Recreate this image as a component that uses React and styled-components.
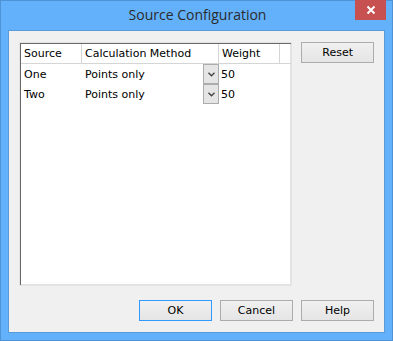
import React from 'react'
import styled, { createGlobalStyle } from 'styled-components'

const rows = [
  { id: 1, source: 'One', method: 'Points only', weight: '50' },
  { id: 2, source: 'Two', method: 'Points only', weight: '50' },
]

const GlobalStyle = createGlobalStyle`
  html, body { margin: 0; padding: 0; background: #ffffff; }
`

const App = () => {
  return (
    <>
      <GlobalStyle />
      <Window>
        <TitleBar>
          <Title>Source Configuration</Title>
          <CloseButton>
            <svg width="10" height="10" viewBox="0 0 10 10">
              <path d="M1.5 1.5 L8.5 8.5 M8.5 1.5 L1.5 8.5" stroke="#fff" strokeWidth="2" />
            </svg>
          </CloseButton>
        </TitleBar>
        <Client>
          <TopArea>
            <Grid>
              <HeaderRow>
                <HeaderCell w={61}>Source</HeaderCell>
                <HeaderCell w={137}>Calculation Method</HeaderCell>
                <HeaderCell w={61}>Weight</HeaderCell>
              </HeaderRow>
              {rows.map((row) => (
                <Row key={row.id}>
                  <Cell w={61}>{row.source}</Cell>
                  <Cell w={137}>
                    <MethodText>{row.method}</MethodText>
                    <DropButton>
                      <svg width="7" height="5" viewBox="0 0 7 5">
                        <path d="M0.5 0.8 L3.5 3.8 L6.5 0.8" stroke="#444" strokeWidth="1.4" fill="none" />
                      </svg>
                    </DropButton>
                  </Cell>
                  <Cell w={61} pad={2}>{row.weight}</Cell>
                </Row>
              ))}
            </Grid>
            <Button>Reset</Button>
          </TopArea>
          <ButtonRow>
            <Button primary>OK</Button>
            <Button>Cancel</Button>
            <Button>Help</Button>
          </ButtonRow>
        </Client>
      </Window>
    </>
  )
}

export default App

const Window = styled.div`
  width: 393px;
  height: 341px;
  box-sizing: border-box;
  background: #63b1fb;
  border: 1px solid #4f93d6;
  display: flex;
  flex-direction: column;
  padding: 0 7px 7px 7px;
  font-family: Tahoma, "DejaVu Sans", "Liberation Sans", sans-serif;
`
const TitleBar = styled.div`
  height: 29px;
  position: relative;
  display: flex;
  justify-content: center;
  align-items: center;
  flex-shrink: 0;
`
const Title = styled.div`
  font-family: "Open Sans", "Noto Sans", sans-serif;
  font-size: 14px;
  color: #2b2b2b;
  margin-top: -3px;
  margin-left: 2px;
`
const CloseButton = styled.div`
  position: absolute;
  top: -1px;
  right: -1px;
  width: 31px;
  height: 20px;
  background: #c75050;
  display: flex;
  justify-content: center;
  align-items: center;
`
const Client = styled.div`
  flex: 1;
  background: #f0f0f0;
  border: 1px solid #5a9ad6;
  display: flex;
  flex-direction: column;
  padding: 11px 10px 11px 10px;
  box-sizing: border-box;
`
const TopArea = styled.div`
  display: flex;
  gap: 9px;
  align-items: flex-start;
`
const Grid = styled.div`
  width: 274px;
  height: 244px;
  box-sizing: border-box;
  background: #ffffff;
  border-top: 1px solid #a0a0a0;
  border-left: 1px solid #a0a0a0;
  border-right: 1px solid #ffffff;
  border-bottom: 1px solid #ffffff;
  box-shadow: inset 1px 1px 0 #696969, inset -1px -1px 0 #e3e3e3;
  padding: 1px 0 0 1px;
  outline: 1px solid #e3e3e3;
  outline-offset: -1px;
`
const HeaderRow = styled.div`
  display: flex;
  height: 20px;
  border-bottom: 1px solid #d5d5d5;
  box-sizing: border-box;
`
const HeaderCell = styled.div`
  width: ${(p) => p.w}px;
  box-sizing: border-box;
  border-right: 1px solid #d5d5d5;
  padding-left: 3px;
  font-size: 11px;
  line-height: 19px;
  color: #000;
  white-space: nowrap;
`
const Row = styled.div`
  display: flex;
  height: 20px;
`
const Cell = styled.div`
  width: ${(p) => p.w}px;
  box-sizing: border-box;
  display: flex;
  align-items: center;
  padding-left: ${(p) => (p.pad !== undefined ? p.pad : 3)}px;
  font-size: 11px;
  color: #000;
  white-space: nowrap;
`
const MethodText = styled.span`
  flex: 1;
`
const DropButton = styled.div`
  width: 16px;
  height: 20px;
  box-sizing: border-box;
  background: #e5e5e5;
  border: 1px solid #acacac;
  display: flex;
  justify-content: center;
  align-items: center;
`
const Button = styled.button`
  width: 73px;
  height: 21px;
  box-sizing: border-box;
  padding: 0;
  margin: 0;
  background: linear-gradient(#f0f0f0, #e5e5e5);
  border: 1px solid ${(p) => (p.primary ? '#3399ff' : '#acacac')};
  font-family: Tahoma, "DejaVu Sans", "Liberation Sans", sans-serif;
  font-size: 11px;
  color: #000;
`
const ButtonRow = styled.div`
  margin-top: auto;
  display: flex;
  justify-content: flex-end;
  gap: 8px;
`
